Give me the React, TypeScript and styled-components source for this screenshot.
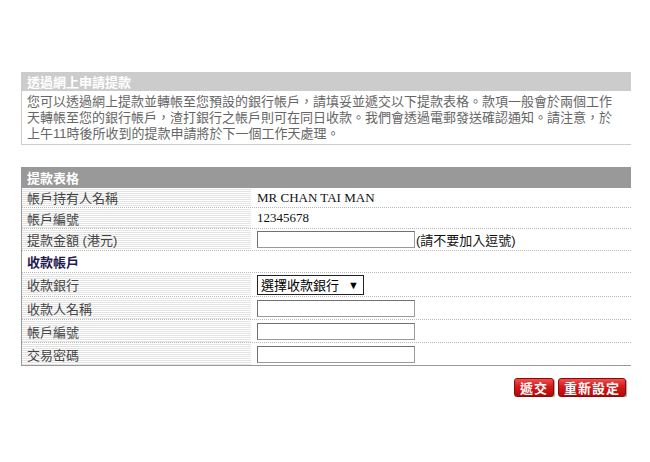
import React from "react";
import styled, { createGlobalStyle } from "styled-components";

const GlobalStyle = createGlobalStyle`
  body {
    margin: 0;
    background: #ffffff;
    font-family: "Liberation Sans", "Noto Sans CJK TC", sans-serif;
    font-size: 13px;
  }
`;

const Page = styled.div`
  width: 610px;
  margin-left: 21px;
  padding-top: 72px;
  display: flex;
  flex-direction: column;
`;

/* Intro panel */
const InfoPanel = styled.section`
  border-left: 1px solid #cccccc;
  border-bottom: 1px solid #cccccc;
`;

interface HeaderProps {
  $tone: "light" | "dark";
}
const PanelHeader = styled.h2<HeaderProps>`
  margin: 0;
  height: ${(p) => (p.$tone === "light" ? "19px" : "21px")};
  display: flex;
  align-items: center;
  padding-left: 5px;
  background: ${(p) => (p.$tone === "light" ? "#cccccc" : "#999999")};
  color: #ffffff;
  font-size: 13px;
  font-weight: bold;
`;

const InfoText = styled.p`
  margin: 0;
  padding: 3px 5px 2px 5px;
  line-height: 16px;
  color: #666666;
`;

/* Form panel */
const FormPanel = styled.section`
  margin-top: 22px;
  display: flex;
  flex-direction: column;
`;

const FormTable = styled.div`
  border-left: 1px solid #999999;
  border-bottom: 1px solid #999999;
  display: flex;
  flex-direction: column;
`;

interface RowProps {
  $height: number;
  $last?: boolean;
}
const Row = styled.div<RowProps>`
  display: grid;
  grid-template-columns: 229px 1fr;
  height: ${(p) => p.$height}px;
  border-bottom: ${(p) => (p.$last ? "none" : "1px dotted #b8b8b8")};
`;

const LabelCell = styled.div`
  display: flex;
  align-items: center;
  padding-left: 5px;
  color: #444444;
  background: repeating-linear-gradient(
    to bottom,
    #ffffff 0px,
    #ffffff 1px,
    #e3e3e3 1px,
    #e3e3e3 2px
  );
`;

const ValueCell = styled.div`
  display: flex;
  align-items: center;
  padding-left: 6px;
  color: #111111;
`;

const SerifValue = styled.span`
  font-family: "Liberation Serif", "Noto Sans CJK TC", serif;
  font-size: 13px;
`;

const SectionTitle = styled.div`
  display: flex;
  align-items: center;
  padding-left: 5px;
  font-weight: bold;
  color: #1f1a4f;
`;

const TextInput = styled.input`
  box-sizing: border-box;
  width: 158px;
  height: 17px;
  margin: 0;
  padding: 0 2px;
  border: 1px solid #9a9a9a;
  border-top-color: #707070;
  border-left-color: #707070;
  background: #ffffff;
  font-size: 12px;
`;

const Hint = styled.span`
  margin-left: 1px;
  color: #111111;
`;

const SelectBox = styled.div`
  box-sizing: border-box;
  width: 107px;
  height: 20px;
  display: flex;
  align-items: center;
  gap: 9px;
  padding-left: 3px;
  border: 1px solid #222222;
  background: #ffffff;
  color: #000000;
  cursor: default;
`;

const Arrow = styled.span`
  font-size: 11px;
`;

/* Buttons */
const ButtonBar = styled.div`
  margin-top: 12px;
  padding-right: 5px;
  display: flex;
  justify-content: flex-end;
  gap: 4px;
`;

const RedButton = styled.button`
  height: 19px;
  padding: 0 5px;
  display: flex;
  align-items: center;
  border: 1px solid #8a0a0a;
  border-radius: 3px;
  background: linear-gradient(to bottom, #f05050 0%, #d41a1a 45%, #b40808 100%);
  box-shadow: 1px 1px 1px rgba(0, 0, 0, 0.35);
  color: #ffffff;
  font-family: "Liberation Sans", "Noto Sans CJK TC", sans-serif;
  font-size: 13px;
  font-weight: bold;
  letter-spacing: 1px;
`;

const App = () => (
  <>
    <GlobalStyle />
    <Page>
      <InfoPanel>
        <PanelHeader $tone="light">透過網上申請提款</PanelHeader>
        <InfoText>
          您可以透過網上提款並轉帳至您預設的銀行帳戶，請填妥並遞交以下提款表格。款項一般會於兩個工作
          <br />
          天轉帳至您的銀行帳戶，渣打銀行之帳戶則可在同日收款。我們會透過電郵發送確認通知。請注意，於
          <br />
          上午11時後所收到的提款申請將於下一個工作天處理。
        </InfoText>
      </InfoPanel>

      <FormPanel>
        <FormTable>
          <PanelHeader $tone="dark">提款表格</PanelHeader>
          <Row $height={19}>
            <LabelCell>帳戶持有人名稱</LabelCell>
            <ValueCell>
              <SerifValue>MR CHAN TAI MAN</SerifValue>
            </ValueCell>
          </Row>
          <Row $height={20}>
            <LabelCell>帳戶編號</LabelCell>
            <ValueCell>
              <SerifValue>12345678</SerifValue>
            </ValueCell>
          </Row>
          <Row $height={21}>
            <LabelCell>提款金額 (港元)</LabelCell>
            <ValueCell>
              <TextInput type="text" />
              <Hint>(請不要加入逗號)</Hint>
            </ValueCell>
          </Row>
          <Row $height={21}>
            <SectionTitle>收款帳戶</SectionTitle>
            <ValueCell />
          </Row>
          <Row $height={23}>
            <LabelCell>收款銀行</LabelCell>
            <ValueCell>
              <SelectBox>
                選擇收款銀行
                <Arrow>▼</Arrow>
              </SelectBox>
            </ValueCell>
          </Row>
          <Row $height={22}>
            <LabelCell>收款人名稱</LabelCell>
            <ValueCell>
              <TextInput type="text" />
            </ValueCell>
          </Row>
          <Row $height={22}>
            <LabelCell>帳戶編號</LabelCell>
            <ValueCell>
              <TextInput type="text" />
            </ValueCell>
          </Row>
          <Row $height={22} $last>
            <LabelCell>交易密碼</LabelCell>
            <ValueCell>
              <TextInput type="password" />
            </ValueCell>
          </Row>
        </FormTable>
      </FormPanel>

      <ButtonBar>
        <RedButton type="button">遞交</RedButton>
        <RedButton type="button">重新設定</RedButton>
      </ButtonBar>
    </Page>
  </>
);

export default App;
